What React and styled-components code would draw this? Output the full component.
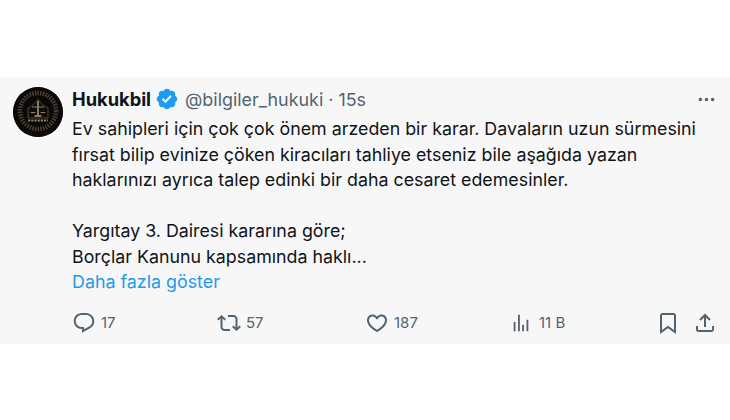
import React from 'react';
import styled, { createGlobalStyle } from 'styled-components';

const Global = createGlobalStyle`
  html, body { margin: 0; padding: 0; background: #fff; }
  body { font-family: "Inter", "Open Sans", "Liberation Sans", sans-serif; }
`;
const Page = styled.div`width: 730px; height: 420px; padding-top: 77px; box-sizing: border-box; overflow: hidden;`;
const Card = styled.article`
  height: 267px; box-sizing: border-box; background: #f7f7f7;
  display: flex; gap: 9px; padding: 10px 13px 0 13px;
`;
const Avatar = styled.div`width: 50px; height: 50px; flex: none; border-radius: 50%; overflow: hidden; background: #0b0908;`;
const Main = styled.div`flex: 1; min-width: 0; display: flex; flex-direction: column;`;
const Head = styled.header`display: flex; align-items: center; height: 24px; color: #536471; font-size: 17.9px; white-space: nowrap;`;
const Name = styled.span`font-weight: 700; color: #0f1419; font-size: 18.3px; margin-right: 4px;`;
const Handle = styled.span`margin-left: 6px;`;
const More = styled.span`margin-left: auto; display: flex;`;
const Body = styled.p`margin: 5px 0 0; color: #0f1419; font-size: 17.82px; line-height: 25.5px; white-space: pre;`;
const ShowMore = styled.span`display: block; color: #1d9bf0; font-size: 17.85px; line-height: 25.5px;`;
const Actions = styled.footer`display: grid; grid-template-columns: 145px 148px 145px 146px 37px auto; margin-top: 16px; height: 24px; color: #536471;`;
const Action = styled.span`display: flex; align-items: center; gap: ${p => p.$gap || 5}px; font-size: 15px;`;
const Icon = styled.svg`width: ${p => p.$s || 24}px; height: ${p => p.$s || 24}px; flex: none; fill: ${p => p.$c || '#536471'};`;

const P = ({ d, s, c }) => <Icon viewBox="0 0 24 24" $s={s} $c={c}><path d={d} /></Icon>;
const I = {
  reply: 'M1.751 10c0-4.42 3.584-8 8.005-8h4.366c4.49 0 8.129 3.64 8.129 8.13 0 2.96-1.607 5.68-4.196 7.11l-8.054 4.46v-3.69h-.067c-4.49.1-8.183-3.51-8.183-8.01zm8.005-6c-3.317 0-6.005 2.69-6.005 6 0 3.37 2.77 6.08 6.138 6.01l.351-.01h1.761v2.3l5.087-2.81c1.951-1.08 3.163-3.13 3.163-5.36 0-3.39-2.744-6.13-6.129-6.13H9.756z',
  rt: 'M4.5 3.88l4.432 4.14-1.364 1.46L5.5 7.55V16c0 1.1.896 2 2 2H13v2H7.5c-2.209 0-4-1.79-4-4V7.55L1.432 9.48.068 8.02 4.5 3.88zM16.5 6H11V4h5.5c2.209 0 4 1.79 4 4v8.45l2.068-1.93 1.364 1.46-4.432 4.14-4.432-4.14 1.364-1.46 2.068 1.93V8c0-1.1-.896-2-2-2z',
  like: 'M16.697 5.5c-1.222-.06-2.679.51-3.89 2.16l-.805 1.09-.806-1.09C9.984 6.01 8.526 5.44 7.304 5.5c-1.243.07-2.349.78-2.91 1.91-.552 1.12-.633 2.78.479 4.82 1.074 1.97 3.257 4.27 7.129 6.61 3.87-2.34 6.052-4.64 7.126-6.61 1.111-2.04 1.03-3.7.477-4.82-.561-1.13-1.666-1.84-2.908-1.91zm4.187 7.69c-1.351 2.48-4.001 5.12-8.379 7.67l-.503.3-.504-.3c-4.379-2.55-7.029-5.19-8.382-7.67-1.36-2.5-1.41-4.86-.514-6.67.887-1.79 2.647-2.91 4.601-3.01 1.651-.09 3.368.56 4.798 2.01 1.429-1.45 3.146-2.1 4.796-2.01 1.954.1 3.714 1.22 4.601 3.01.896 1.81.846 4.17-.514 6.67z',
  views: 'M8.75 21V3h2v18h-2zM18 21V8.5h2V21h-2zM4 21l.004-10h2L6 21H4zm9.248 0v-7h2v7h-2z',
  bm: 'M4 4.5C4 3.12 5.119 2 6.5 2h11C18.881 2 20 3.12 20 4.5v18.44l-8-5.71-8 5.71V4.5zM6.5 4c-.276 0-.5.22-.5.5v14.56l6-4.29 6 4.29V4.5c0-.28-.224-.5-.5-.5h-11z',
  share: 'M12 2.59l5.7 5.7-1.41 1.42L13 6.41V16h-2V6.41l-3.3 3.3-1.41-1.42L12 2.59zM21 15l-.02 3.51c0 1.38-1.12 2.49-2.5 2.49H5.5C4.11 21 3 19.88 3 18.5V15h2v3.5c0 .28.22.5.5.5h12.98c.28 0 .5-.22.5-.49L19 15h2z',
  ver: 'M22.25 12c0-1.43-.88-2.67-2.19-3.34.46-1.39.2-2.9-.81-3.91s-2.52-1.27-3.91-.81c-.66-1.31-1.91-2.19-3.34-2.19s-2.67.88-3.33 2.19c-1.4-.46-2.91-.2-3.92.81s-1.26 2.52-.8 3.91c-1.31.67-2.2 1.91-2.2 3.34s.89 2.67 2.2 3.34c-.46 1.39-.21 2.9.8 3.91s2.52 1.26 3.91.81c.67 1.31 1.91 2.19 3.34 2.19s2.68-.88 3.34-2.19c1.39.45 2.9.2 3.91-.81s1.27-2.52.81-3.91c1.31-.67 2.19-1.91 2.19-3.34zm-11.71 4.2L6.8 12.46l1.41-1.42 2.26 2.26 4.8-5.23 1.47 1.36-6.2 6.77z',
  dots: 'M3 12c0-1.1.9-2 2-2s2 .9 2 2-.9 2-2 2-2-.9-2-2zm9 2c1.1 0 2-.9 2-2s-.9-2-2-2-2 .9-2 2 .9 2 2 2zm7 0c1.1 0 2-.9 2-2s-.9-2-2-2-2 .9-2 2 .9 2 2 2z',
};

const Logo = () => (
  <svg viewBox="0 0 50 50" width="50" height="50">
    <circle cx="25" cy="25" r="25" fill="#0b0908" />
    <circle cx="25" cy="24" r="18" fill="none" stroke="#4a3f30" strokeWidth="4.5" strokeDasharray="1.5 1.2" />
    <path d="M15 31V21c3-1 7-4 10-9 3 5 7 8 10 9v10z" fill="#0f0d0b" stroke="#544735" strokeWidth="1" />
    <path d="M25 14v15" stroke="#a89878" strokeWidth="1.6" fill="none" />
    <path d="M19 20h12" stroke="#8f8066" strokeWidth="1.1" fill="none" />
    <path d="M17 25q3 2.5 6 0zM27 25q3 2.5 6 0z" fill="#8f8066" />
    <path d="M21.5 29h7" stroke="#a89878" strokeWidth="1.4" />
    <path d="M15 33.5h20" stroke="#8f8066" strokeWidth="2" strokeDasharray="2.2 1" />
  </svg>
);

export default function App() {
  return (
    <Page>
      <Global />
      <Card>
        <Avatar><Logo /></Avatar>
        <Main>
          <Head>
            <Name>Hukukbil</Name>
            <P d={I.ver} s={24} c="#1d9bf0" />
            <Handle>@bilgiler_hukuki · 15s</Handle>
            <More><P d={I.dots} s={21} c="#536471" /></More>
          </Head>
          <Body>{`Ev sahipleri için çok çok önem arzeden bir karar. Davaların uzun sürmesini
fırsat bilip evinize çöken kiracıları tahliye etseniz bile aşağıda yazan
haklarınızı ayrıca talep edinki bir daha cesaret edemesinler.

Yargıtay 3. Dairesi kararına göre;
Borçlar Kanunu kapsamında haklı...`}</Body>
          <ShowMore>Daha fazla göster</ShowMore>
          <Actions>
            <Action><P d={I.reply} />17</Action>
            <Action><P d={I.rt} />57</Action>
            <Action><P d={I.like} />187</Action>
            <Action $gap={7}><P d={I.views} s={22} />11 B</Action>
            <Action><P d={I.bm} /></Action>
            <Action><P d={I.share} /></Action>
          </Actions>
        </Main>
      </Card>
    </Page>
  );
}
